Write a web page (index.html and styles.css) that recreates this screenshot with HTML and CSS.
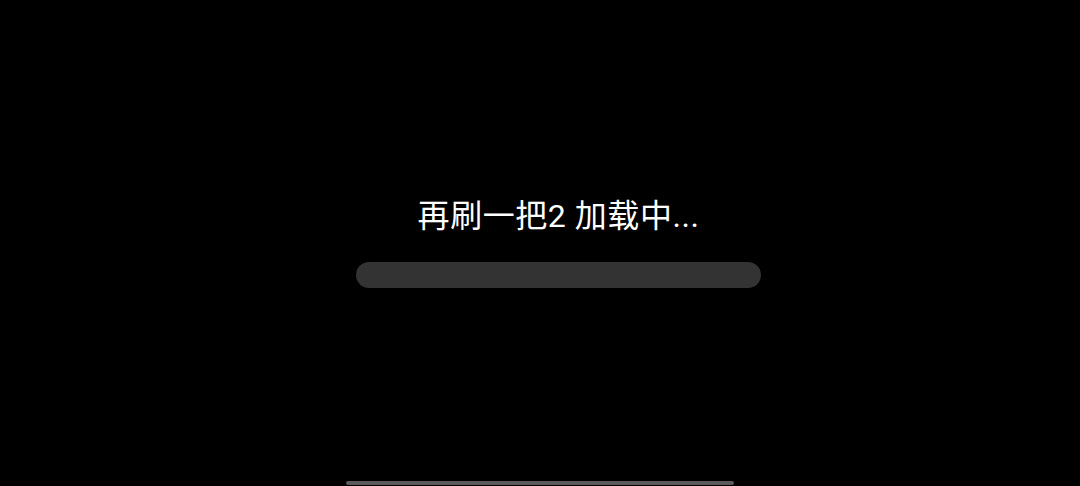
FILE: index.html
```html
<!DOCTYPE html>
<html lang="zh">
<head>
<meta charset="utf-8">
<link rel="stylesheet" href="styles.css">
</head>
<body>
<div class="screen">
  <div class="loader">
    <div class="label">再刷一把2 加载中...</div>
    <div class="track"></div>
  </div>
  <div class="home"></div>
</div>
</body>
</html>
```
FILE: styles.css
```css
html, body {
  margin: 0;
  padding: 0;
  background: #000;
}
.screen {
  width: 1080px;
  height: 486px;
  display: flex;
  flex-direction: column;
  align-items: center;
  background: #000;
}
.loader {
  margin-top: 196px;
  margin-left: 37px;
  display: flex;
  flex-direction: column;
  align-items: center;
  gap: 26px;
}
.label {
  font-family: Roboto, "Noto Sans CJK SC", sans-serif;
  font-size: 32px;
  line-height: 40px;
  letter-spacing: 0.55px;
  color: #fff;
  white-space: nowrap;
}
.track {
  width: 405px;
  height: 26px;
  border-radius: 13px;
  background: #333;
}
.home {
  margin-top: auto;
  margin-bottom: 1px;
  width: 388px;
  height: 4px;
  border-radius: 2px;
  background: #5a5a5a;
}
```
